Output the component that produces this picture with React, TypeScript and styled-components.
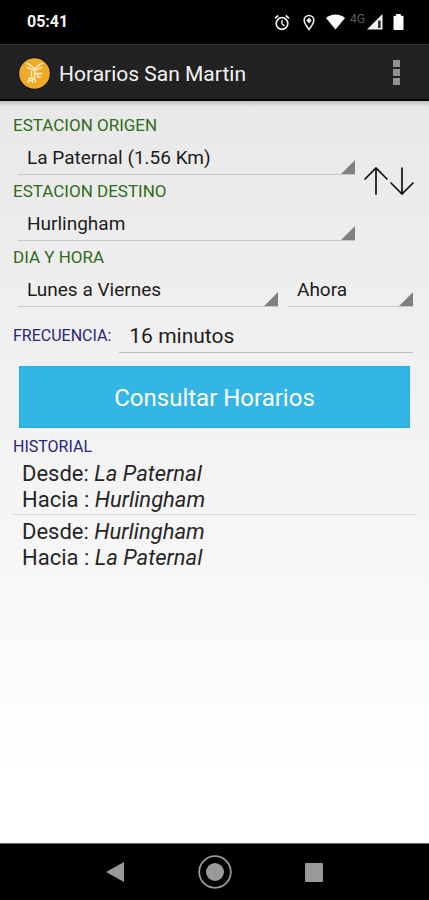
import React, { useState } from 'react';
import styled, { createGlobalStyle } from 'styled-components';

const GlobalStyle = createGlobalStyle`
  *, *::before, *::after { box-sizing: border-box; }
  body { margin: 0; background: #000; }
  body, button, input, select { font-family: Roboto, "Liberation Sans", sans-serif; }
`;

const Screen = styled.div`
  min-height: 100vh;
  display: flex;
  flex-direction: column;
`;

const StatusBar = styled.div`
  height: 44px;
  padding: 0 25px 0 27px;
  display: flex;
  align-items: center;
  justify-content: space-between;
  background: #000;
  color: #f4f4f4;
`;

const Clock = styled.time`
  font-size: 16px;
  line-height: 20px;
  font-weight: 700;
`;

const StatusIcons = styled.div`
  display: flex;
  align-items: center;
  svg { display: block; }
`;

const Network = styled.span`
  margin: 0 2px 6px 5px;
  font-size: 12px;
  line-height: 12px;
  color: #5c5c5c;
`;

const Spacer = styled.span<{ $size: number }>`
  width: ${(p) => p.$size}px;
`;

const AppBar = styled.header`
  height: 57px;
  padding: 2px 22px 0 18px;
  display: flex;
  align-items: center;
  background: #222;
  border-top: 1px solid #303030;
  border-bottom: 2px solid #080808;
`;

const Title = styled.h1`
  flex: 1;
  margin: 0 0 0 8px;
  padding-top: 1px;
  font-size: 21px;
  line-height: 28px;
  font-weight: 400;
  color: #f3f3f3;
`;

const IconButton = styled.button`
  display: flex;
  padding: 0;
  border: 0;
  background: transparent;
  color: inherit;
  cursor: pointer;
`;

const Content = styled.main`
  flex: 1;
  padding: 14px 12px 14px 13px;
  background:
    linear-gradient(rgba(0, 0, 0, 0.16), rgba(0, 0, 0, 0)) top / 100% 6px no-repeat,
    linear-gradient(#e8e8e8, #efefef 28%, #f5f5f5 55%, #fff 90%);
`;

const Stations = styled.div`
  display: flex;
  align-items: center;
`;

const StationFields = styled.div`
  flex: 1;
  min-width: 0;
`;

const SwapButton = styled(IconButton)`
  padding: 0 3px 0 9px;
`;

const Field = styled.div`
  display: flex;
  flex-direction: column;
  padding-bottom: 6px;
`;

const Label = styled.label<{ $tone?: 'green' | 'navy' }>`
  font-size: ${(p) => (p.$tone === 'navy' ? 16 : 17)}px;
  line-height: 20px;
  color: ${(p) => (p.$tone === 'navy' ? '#29257a' : '#2f6b20')};
`;

const Spinner = styled.select`
  appearance: none;
  width: 100%;
  height: 40px;
  padding: 6px 16px 0 9px;
  border: 0;
  border-bottom: 1px solid #c6c6c6;
  border-radius: 0;
  background: linear-gradient(135deg, transparent 48%, #808080 53%) right bottom / 14px 14px no-repeat;
  font-size: 19px;
  line-height: 24px;
  color: #1c1c1c;
`;

const SpinnerSlot = styled.div`
  padding-left: 5px;
`;

const DateRow = styled.div`
  display: grid;
  grid-template-columns: 260fr 125fr;
  gap: 10px;
  padding: 0 4px 0 5px;
`;

const FrequencyRow = styled.div`
  display: flex;
  align-items: center;
  gap: 8px;
  padding: 6px 4px 0 0;
`;

const FrequencyInput = styled.input`
  flex: 1;
  min-width: 0;
  height: 34px;
  padding: 0 10px;
  border: 0;
  border-bottom: 1px solid #bdbdbd;
  border-radius: 0;
  background: transparent;
  font-size: 21px;
  color: #1c1c1c;
`;

const SubmitRow = styled.div`
  display: flex;
  padding: 13px 7px 9px 6px;
`;

const SubmitButton = styled.button`
  flex: 1;
  height: 62px;
  padding: 2px 0 0;
  border: 1px solid #1fb0de;
  background: #33b5e5;
  color: #fff;
  font-size: 24px;
  line-height: 30px;
  cursor: pointer;
`;

const SectionTitle = styled.h2`
  margin: 0;
  font-size: 16px;
  line-height: 20px;
  font-weight: 400;
  color: #29257a;
`;

const HistoryList = styled.ul`
  margin: 0;
  padding: 4px 0 0;
  list-style: none;
`;

const HistoryItem = styled.li`
  padding: 0 9px 1px;
  font-size: 22px;
  line-height: 26px;
  color: #262626;
  & + & {
    padding-top: 4px;
    border-top: 1px solid #d9d9d9;
  }
`;

const Leg = styled.div``;

const NavBar = styled.nav`
  height: 57px;
  padding: 0 106px;
  display: flex;
  align-items: center;
  justify-content: space-between;
  background: #000;
  border-top: 1px solid #666;
  svg { display: block; }
`;

const AlarmIcon = () => (
  <svg width="16" height="17" viewBox="0 0 16 17" fill="none" stroke="#eee">
    <circle cx="8" cy="9.5" r="5.8" strokeWidth="1.7" />
    <path d="M8 6v4l2.6 1.8" strokeWidth="1.4" />
    <path d="M1 4.3 4.2 1.5M15 4.3l-3.200-2.800" strokeWidth="1.7" />
  </svg>
);

const PinIcon = () => (
  <svg width="12" height="17" viewBox="0 0 12 17" fill="none" stroke="#eee">
    <path d="M6 15.500C3.200 12 1.200 9 1.200 6.300a4.800 4.800 0 0 1 9.600 0C10.800 9 8.800 12 6 15.500Z" strokeWidth="1.6" />
    <path d="M6 3.500 8.600 6.500 6 9.500 3.400 6.500Z" fill="#eee" stroke="none" />
  </svg>
);

const WifiIcon = () => (
  <svg width="19" height="16" viewBox="0 0 19 16">
    <path d="M0 4C2.500 1.700 5.800.5 9.500.5S16.500 1.700 19 4L9.500 15.500Z" fill="#fff" />
  </svg>
);

const SignalIcon = () => (
  <svg width="16" height="16" viewBox="0 0 16 16">
    <path d="M0 15.500 15.500 0v15.500Z" fill="#f2f2f2" />
    <path d="M11 6.500h2.700v7.500H11Z" fill="#333" />
  </svg>
);

const BatteryIcon = () => (
  <svg width="11" height="16" viewBox="0 0 11 16">
    <path d="M3.200 0h4.600v1.800H9.500a1 1 0 0 1 1 1V15a1 1 0 0 1-1 1h-8a1 1 0 0 1-1-1V2.800a1 1 0 0 1 1-1h1.700Z" fill="#fff" />
  </svg>
);

const Logo = () => (
  <svg width="33" height="33" viewBox="0 0 33 33" aria-hidden="true">
    <circle cx="16.500" cy="16.500" r="16.500" fill="#11151c" />
    <circle cx="16.500" cy="16.500" r="15.300" fill="#efaa27" />
    <g fill="none" stroke="#fff3d3" strokeWidth="1.400" strokeLinecap="round" strokeLinejoin="round">
      <path d="M9 6.500c2.500.5 3 2 5 3.200 1.500 1 2.500 1.500 2.500 3.500v8c0 1.500 1 1.500 1 3.800" />
      <path d="M24 6.500c-2.500.3-3.500 2-5 3.200l-2.500 2.800M9 10.500c2.500.2 3.500 1.500 5.500 2.500M24 10.500c-2.500 0-3.500 1.500-5.500 2.500" />
      <path d="M17 16.500h6.500M19.500 16.500v3.500h3M13.500 14.500v4M10 25.500l1.500-4.500h3v4.500M11 23.500h3.500" />
    </g>
  </svg>
);

const MoreIcon = () => (
  <svg width="22" height="28" viewBox="0 0 22 28" fill="#929292">
    <rect x="8" y="1" width="7" height="7" />
    <rect x="8" y="10" width="7" height="7" />
    <rect x="8" y="19" width="7" height="7" />
  </svg>
);

const SwapIcon = () => (
  <svg width="50" height="28" viewBox="0 0 50 28" fill="none" stroke="#111" strokeWidth="1.700" strokeLinecap="round">
    <path d="M12 27V1M1 12 12 1l11 11" />
    <path d="M38 1v26M27 16l11 11 11-11" />
  </svg>
);

const stations = ['La Paternal', 'Hurlingham', 'Retiro', 'Villa del Parque', 'Pilar'];

const history = [
  { from: 'La Paternal', to: 'Hurlingham' },
  { from: 'Hurlingham', to: 'La Paternal' },
];

export default function App() {
  const [origin, setOrigin] = useState('La Paternal');
  const [destination, setDestination] = useState('Hurlingham');
  const [frequency, setFrequency] = useState('16 minutos');

  const swap = () => {
    setOrigin(destination);
    setDestination(origin);
  };

  return (
    <Screen>
      <GlobalStyle />
      <StatusBar>
        <Clock>05:41</Clock>
        <StatusIcons>
          <AlarmIcon />
          <Spacer $size={13} />
          <PinIcon />
          <Spacer $size={11} />
          <WifiIcon />
          <Network>4G</Network>
          <SignalIcon />
          <Spacer $size={10} />
          <BatteryIcon />
        </StatusIcons>
      </StatusBar>
      <AppBar>
        <Logo />
        <Title>Horarios San Martin</Title>
        <IconButton type="button" aria-label="Más opciones">
          <MoreIcon />
        </IconButton>
      </AppBar>
      <Content>
        <Stations>
          <StationFields>
            <Field>
              <Label htmlFor="origin">ESTACION ORIGEN</Label>
              <SpinnerSlot>
                <Spinner id="origin" value={origin} onChange={(e) => setOrigin(e.target.value)}>
                  {stations.map((s) => (
                    <option key={s} value={s}>{s === 'La Paternal' ? 'La Paternal (1.56 Km)' : s}</option>
                  ))}
                </Spinner>
              </SpinnerSlot>
            </Field>
            <Field>
              <Label htmlFor="destination">ESTACION DESTINO</Label>
              <SpinnerSlot>
                <Spinner id="destination" value={destination} onChange={(e) => setDestination(e.target.value)}>
                  {stations.map((s) => (
                    <option key={s} value={s}>{s}</option>
                  ))}
                </Spinner>
              </SpinnerSlot>
            </Field>
          </StationFields>
          <SwapButton type="button" aria-label="Invertir estaciones" onClick={swap}>
            <SwapIcon />
          </SwapButton>
        </Stations>
        <Field>
          <Label htmlFor="day">DIA Y HORA</Label>
          <DateRow>
            <Spinner id="day">
              <option>Lunes a Viernes</option>
              <option>Sábado</option>
              <option>Domingo</option>
            </Spinner>
            <Spinner aria-label="Hora">
              <option>Ahora</option>
              <option>06:00</option>
              <option>12:00</option>
            </Spinner>
          </DateRow>
        </Field>
        <FrequencyRow>
          <Label htmlFor="frequency" $tone="navy">FRECUENCIA:</Label>
          <FrequencyInput id="frequency" value={frequency} onChange={(e) => setFrequency(e.target.value)} />
        </FrequencyRow>
        <SubmitRow>
          <SubmitButton type="button">Consultar Horarios</SubmitButton>
        </SubmitRow>
        <SectionTitle>HISTORIAL</SectionTitle>
        <HistoryList>
          {history.map((h) => (
            <HistoryItem key={h.from}>
              <Leg>Desde: <em>{h.from}</em></Leg>
              <Leg>Hacia : <em>{h.to}</em></Leg>
            </HistoryItem>
          ))}
        </HistoryList>
      </Content>
      <NavBar>
        <IconButton type="button" aria-label="Atrás">
          <svg width="18" height="20" viewBox="0 0 18 20"><path d="M0 10 18 0v20Z" fill="#999" /></svg>
        </IconButton>
        <IconButton type="button" aria-label="Inicio">
          <svg width="34" height="34" viewBox="0 0 34 34">
            <circle cx="17" cy="17" r="15.800" fill="none" stroke="#999" strokeWidth="1.800" />
            <circle cx="17" cy="17" r="9" fill="#999" />
          </svg>
        </IconButton>
        <IconButton type="button" aria-label="Recientes">
          <svg width="18" height="19" viewBox="0 0 18 19"><rect width="18" height="19" rx="1" fill="#999" /></svg>
        </IconButton>
      </NavBar>
    </Screen>
  );
}
